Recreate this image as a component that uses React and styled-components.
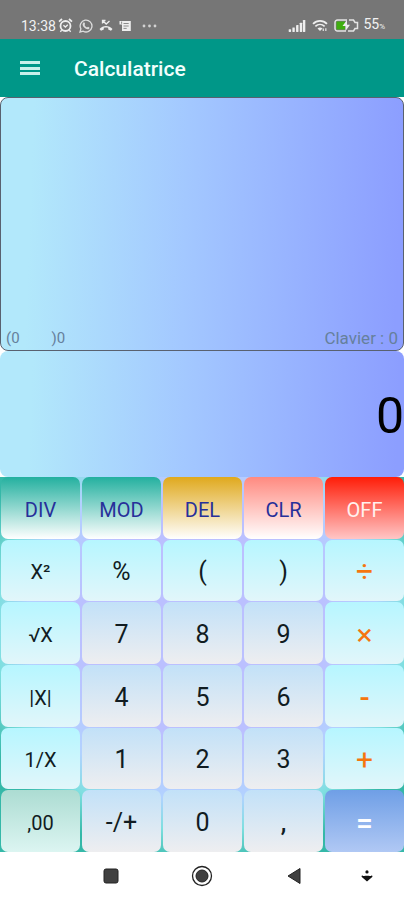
import React, { useState } from "react";
import styled, { createGlobalStyle } from "styled-components";

const GlobalStyle = createGlobalStyle`
  * {
    box-sizing: border-box;
  }
  body {
    margin: 0;
    background: #ffffff;
    font-family: Roboto, "Liberation Sans", sans-serif;
  }
`;

const Screen = styled.div`
  min-height: 100vh;
  display: flex;
  flex-direction: column;
`;

const StatusBar = styled.div`
  height: 39px;
  padding: 12px 19px 0 21px;
  display: flex;
  align-items: center;
  justify-content: space-between;
  background: #767676;
  color: #f2f2f2;
  font-size: 14px;
  line-height: 16px;
`;

const StatusGroup = styled.div`
  display: flex;
  align-items: center;
  gap: ${(props) => props.$gap || "6px"};
`;

const Percent = styled.span`
  font-size: 8px;
`;

const AppBar = styled.header`
  height: 58px;
  padding: 2px 20px 0;
  display: flex;
  align-items: center;
  gap: 34px;
  background: #009788;
`;

const MenuButton = styled.button`
  width: 20px;
  height: 20px;
  padding: 0;
  border: none;
  background: none;
  display: flex;
  align-items: center;
  justify-content: center;
  cursor: pointer;
`;

const Title = styled.h1`
  margin: 0;
  color: #f2fffd;
  font-size: 21px;
  line-height: 24px;
  font-weight: 500;
`;

const History = styled.section`
  height: 254px;
  padding: 0 5px 3px;
  display: flex;
  align-items: flex-end;
  justify-content: space-between;
  border: 1px solid #59616f;
  border-radius: 8px;
  background: linear-gradient(92deg, #b2e8fb 8%, #a3c8ff 46%, #8c9eff 98%);
  color: #66809c;
  font-size: 17px;
  line-height: 18px;
`;

const Brackets = styled.div`
  display: flex;
  gap: 32px;
  font-size: 15px;
`;

const Result = styled.output`
  height: 126px;
  display: flex;
  align-items: center;
  justify-content: flex-end;
  padding-top: 4px;
  border-radius: 8px;
  background: linear-gradient(92deg, #b2e8fb 8%, #a3c8ff 46%, #8c9eff 98%);
  color: #000000;
  font-size: 50px;
  line-height: 60px;
`;

const Keypad = styled.main`
  flex: 1;
  display: grid;
  grid-template-columns: repeat(5, 1fr);
  grid-template-rows: repeat(6, 1fr);
  gap: 1px 2px;
  padding-left: 1px;
  background: radial-gradient(
    circle at 50% 40%,
    #bbc0ff 120px,
    #b2d2ff 175px,
    #7fdfe0 205px,
    #35b8a8 240px
  );
`;

const fills = {
  teal: "linear-gradient(#23b09f, #ffffff)",
  gold: "linear-gradient(#e0a91d, #ffffff)",
  pink: "linear-gradient(#ff8a80, #ffffff)",
  red: "linear-gradient(#ff1d08, #ffc6c6)",
  cyan: "linear-gradient(#b6f6ff, #e2f6fa)",
  grey: "linear-gradient(#c2e1f8, #eeeef0)",
  mint: "linear-gradient(#acdcd2, #dcf5f1)",
  blue: "linear-gradient(#6f9fe6, #b0c8f4)",
};

const Key = styled.button`
  min-width: 0;
  min-height: 48px;
  padding: 4px 0 0;
  border: none;
  border-radius: 7px;
  background: ${(props) => fills[props.$fill]};
  color: ${(props) => props.$color || "#111c22"};
  font-family: inherit;
  font-size: ${(props) => props.$size || "25px"};
  line-height: 30px;
  font-weight: ${(props) => props.$weight || 400};
  cursor: pointer;
`;

const NavBar = styled.nav`
  height: 48px;
  display: grid;
  grid-template-columns: 65px repeat(3, 1fr) 54px 10px;
  align-items: center;
  background: #ffffff;
`;

const NavButton = styled.button`
  padding: 0;
  border: none;
  background: none;
  display: flex;
  justify-content: center;
  cursor: pointer;
`;

const navy = "#27309a";
const orange = "#f5760f";

const keys = [
  { label: "DIV", fill: "teal", color: navy, size: "20px" },
  { label: "MOD", fill: "teal", color: navy, size: "20px" },
  { label: "DEL", fill: "gold", color: navy, size: "20px" },
  { label: "CLR", fill: "pink", color: navy, size: "20px" },
  { label: "OFF", fill: "red", color: "#fff0ee", size: "20px" },
  { label: "X²", fill: "cyan", size: "20px" },
  { label: "%", fill: "cyan", size: "25px" },
  { label: "(", fill: "cyan" },
  { label: ")", fill: "cyan" },
  { label: "÷", fill: "cyan", color: orange, size: "30px" },
  { label: "√X", fill: "cyan", size: "20px" },
  { label: "7", fill: "grey" },
  { label: "8", fill: "grey" },
  { label: "9", fill: "grey" },
  { label: "×", fill: "cyan", color: orange, size: "30px" },
  { label: "|X|", fill: "cyan", size: "20px" },
  { label: "4", fill: "grey" },
  { label: "5", fill: "grey" },
  { label: "6", fill: "grey" },
  { label: "-", fill: "cyan", color: orange, size: "30px", weight: 500 },
  { label: "1/X", fill: "cyan", size: "20px" },
  { label: "1", fill: "grey" },
  { label: "2", fill: "grey" },
  { label: "3", fill: "grey" },
  { label: "+", fill: "cyan", color: orange, size: "30px" },
  { label: ",00", fill: "mint", size: "20px" },
  { label: "-/+", fill: "grey" },
  { label: "0", fill: "grey" },
  { label: ",", fill: "grey", weight: 500 },
  { label: "=", fill: "blue", color: "#ffffff", size: "30px", weight: 500 },
];

const AlarmIcon = () => (
  <svg width="15" height="15" viewBox="0 0 15 15" fill="none" stroke="#eeeeee">
    <circle cx="7.5" cy="8" r="5" strokeWidth="1.8" />
    <path d="M1 3.6 4 1M14 3.6 11 1" strokeWidth="1.8" />
    <path d="M5.4 7.2 7.4 9l2.400-2.200M3.600 12.200 2.400 13.800M11.400 12.200l1.200 1.600" strokeWidth="1.400" />
  </svg>
);

const PhoneChatIcon = () => (
  <svg width="14" height="14" viewBox="0 0 14 14">
    <path
      d="M1 13l.9-3.1A5.9 5.9 0 1 1 4.2 12.2z"
      fill="none"
      stroke="#dddddd"
      strokeWidth="1.3"
    />
    <path
      d="M4.4 3.7c.7-.7 1.2-.3 1.7 1.2L5.5 6c.5 1.1 1.3 1.9 2.5 2.5l1-.8c1.4.6 1.8 1 1.3 1.7-.8 1.2-2.2 1.2-3.800.2C4.7 8.4 3.4 6.5 3.6 5z"
      fill="#dddddd"
    />
  </svg>
);

const MissedCallIcon = () => (
  <svg width="14" height="13" viewBox="0 0 14 13" fill="none" stroke="#eeeeee">
    <path d="M3.5 4.500v-3h3M3.800 1.800 7.200 5 10.500 2" strokeWidth="1.300" />
    <path
      d="M.5 10c3.500-4 9.500-4 13 0l-1.500 1.800-2.800-1.300V8.800c-1.400-.5-3-.5-4.400 0v1.700L2 11.800z"
      fill="#eeeeee"
      stroke="none"
    />
  </svg>
);

const NoteIcon = () => (
  <svg width="13" height="12" viewBox="0 0 13 12">
    <path d="M.5 1h11.300v10H3V4.500H.5z" fill="#eeeeee" />
    <path d="M4.500 3.500h5.200M4.500 6h5.200M4.500 8.400h3.200M2.600 1.600v2.200" stroke="#8c8c8c" strokeWidth="1" />
  </svg>
);

const DotsIcon = () => (
  <svg width="15" height="4" viewBox="0 0 15 4" fill="#d2d2d2">
    <circle cx="2" cy="2" r="1.400" />
    <circle cx="7.500" cy="2" r="1.400" />
    <circle cx="13" cy="2" r="1.400" />
  </svg>
);

const SignalIcon = () => (
  <svg width="18" height="12" viewBox="0 0 18 13" fill="#eeeeee">
    <rect x="0" y="10" width="2.600" height="3" rx=".5" />
    <rect x="4" y="8" width="2.600" height="5" rx=".5" />
    <rect x="8" y="5.500" width="2.600" height="7.500" rx=".5" />
    <rect x="12" y="3" width="2.600" height="10" rx=".5" />
    <rect x="15.400" y="0" width="2.600" height="13" rx=".5" />
  </svg>
);

const WifiIcon = () => (
  <svg width="16" height="13" viewBox="0 0 17 14" fill="none" stroke="#eeeeee">
    <path d="M1 5.200c4.300-4.300 10.700-4.300 15 0" strokeWidth="2" />
    <path d="M3.500 8c2.900-2.800 7.100-2.800 10 0" strokeWidth="1.800" />
    <path d="M5.800 10.300c1.700-1.500 3.700-1.500 5.400 0L8.500 13z" fill="#eeeeee" stroke="none" />
    <path d="M12 13v-2.800M14.800 10v3" strokeWidth="1.200" />
  </svg>
);

const BatteryIcon = () => (
  <svg width="25" height="13" viewBox="0 0 25 13">
    <path
      d="M13 1H3.500A2.500 2.500 0 0 0 1 3.500v6A2.500 2.500 0 0 0 3.500 12H12M15 1h4.500L21 3.500h2.500v6H21L19.500 12H14"
      fill="none"
      stroke="#e4e4e4"
      strokeWidth="1.500"
    />
    <rect x="2.500" y="2.500" width="8.500" height="8" fill="#3fae10" />
    <path d="M13 1 8.500 7h3v5L16 5.800h-3z" fill="#eeeeee" />
  </svg>
);

const App = () => {
  const [value, setValue] = useState("0");

  const handleKey = (label) => {
    if (/^\d$/.test(label)) {
      setValue((prev) => (prev === "0" ? label : prev + label));
    } else if (label === "CLR") {
      setValue("0");
    } else if (label === "DEL") {
      setValue((prev) => prev.slice(0, -1) || "0");
    }
  };

  return (
    <Screen>
      <GlobalStyle />
      <StatusBar>
        <StatusGroup $gap="10px">
          <StatusGroup>
            <StatusGroup $gap="2px">
              <span>13:38</span>
              <AlarmIcon />
            </StatusGroup>
            <PhoneChatIcon />
            <MissedCallIcon />
            <NoteIcon />
          </StatusGroup>
          <DotsIcon />
        </StatusGroup>
        <StatusGroup $gap="6px">
          <SignalIcon />
          <WifiIcon />
          <StatusGroup $gap="4px">
            <BatteryIcon />
            <span>
              55<Percent>%</Percent>
            </span>
          </StatusGroup>
        </StatusGroup>
      </StatusBar>
      <AppBar>
        <MenuButton aria-label="Menu">
          <svg width="20" height="16" viewBox="0 0 20 16" fill="#c9f0ea">
            <rect y="0" width="20" height="3" />
            <rect y="6" width="20" height="3" />
            <rect y="11" width="20" height="3" />
          </svg>
        </MenuButton>
        <Title>Calculatrice</Title>
      </AppBar>
      <History>
        <Brackets>
          <span>(0</span>
          <span>)0</span>
        </Brackets>
        <span>Clavier : 0</span>
      </History>
      <Result>{value}</Result>
      <Keypad>
        {keys.map((key) => (
          <Key
            key={key.label}
            $fill={key.fill}
            $color={key.color}
            $size={key.size}
            $weight={key.weight}
            onClick={() => handleKey(key.label)}
          >
            {key.label}
          </Key>
        ))}
      </Keypad>
      <NavBar>
        <span />
        <NavButton aria-label="Recents">
          <svg width="16" height="16" viewBox="0 0 16 16">
            <rect x="1" y="1" width="14" height="14" rx="2" fill="#404040" stroke="#222222" />
          </svg>
        </NavButton>
        <NavButton aria-label="Home">
          <svg width="22" height="22" viewBox="0 0 22 22">
            <circle cx="11" cy="11" r="9.500" fill="none" stroke="#222222" strokeWidth="1.300" />
            <circle cx="11" cy="11" r="6" fill="#404040" stroke="#222222" />
          </svg>
        </NavButton>
        <NavButton aria-label="Back">
          <svg width="14" height="18" viewBox="0 0 14 18">
            <path d="M13 1.500v15L1 9z" fill="#404040" stroke="#222222" />
          </svg>
        </NavButton>
        <NavButton aria-label="Hide bar">
          <svg width="12" height="12" viewBox="0 0 12 12" fill="#111111">
            <circle cx="6" cy="1.900" r="1.600" />
            <path d="M1 5.200c1.500 1.400 3 .6 5 .6s3.500.8 5-.6l.5 1.600L6 11.500.5 6.800z" />
          </svg>
        </NavButton>
      </NavBar>
    </Screen>
  );
};

export default App;
